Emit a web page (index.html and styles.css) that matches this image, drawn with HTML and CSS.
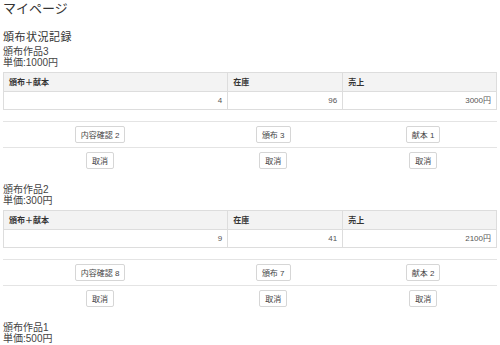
FILE: index.html
```html
<!DOCTYPE html>
<html lang="ja">
<head>
  <meta charset="UTF-8">
  <title>マイページ</title>
  <link rel="stylesheet" href="styles.css">
</head>
<body>
  <h1>マイページ</h1>
  <h2>頒布状況記録</h2>

  <!-- 作品ごとの記録 -->
  <div class="work">
    <p class="work-info">頒布作品3<br>単価:1000円</p>
    <table class="stats">
      <tr><th class="col-count">頒布＋献本</th><th class="col-stock">在庫</th><th>売上</th></tr>
      <tr><td>4</td><td>96</td><td>3000円</td></tr>
    </table>
    <table class="actions">
      <tr>
        <td class="col-check"><button>内容確認 2</button></td>
        <td class="col-sell"><button>頒布 3</button></td>
        <td><button>献本 1</button></td>
      </tr>
      <tr>
        <td><button>取消</button></td>
        <td><button>取消</button></td>
        <td><button>取消</button></td>
      </tr>
    </table>
  </div>

  <div class="work">
    <p class="work-info">頒布作品2<br>単価:300円</p>
    <table class="stats">
      <tr><th class="col-count">頒布＋献本</th><th class="col-stock">在庫</th><th>売上</th></tr>
      <tr><td>9</td><td>41</td><td>2100円</td></tr>
    </table>
    <table class="actions">
      <tr>
        <td class="col-check"><button>内容確認 8</button></td>
        <td class="col-sell"><button>頒布 7</button></td>
        <td><button>献本 2</button></td>
      </tr>
      <tr>
        <td><button>取消</button></td>
        <td><button>取消</button></td>
        <td><button>取消</button></td>
      </tr>
    </table>
  </div>

  <div class="work">
    <p class="work-info">頒布作品1<br>単価:500円</p>
  </div>
</body>
</html>
```

FILE: styles.css
```css
body {
  font-family: 'Liberation Sans', 'Noto Sans CJK JP', sans-serif;
  margin: 0;
  padding: 0 3px;
  color: #333;
  font-size: 10px;
  line-height: 11px;
}

h1 {
  font-size: 13px;
  font-weight: normal;
  line-height: 17px;
  margin: 0;
}

h2 {
  font-size: 11px;
  font-weight: normal;
  line-height: 14px;
  margin: 13px 0 2px;
  letter-spacing: 0.5px;
}

.work {
  margin-bottom: 11px;
}

.work-info {
  margin: 0;
  color: #444;
}

.stats {
  width: 100%;
  margin-top: 4px;
  border-collapse: collapse;
  font-size: 8px;
}

.stats th,
.stats td {
  border: 1px solid #ddd;
  padding: 0 5px;
  height: 17px;
}

.stats th {
  background-color: #f3f3f3;
  text-align: left;
  height: 18px;
}

.stats td {
  text-align: right;
  color: #555;
}

.col-count {
  width: 45.5%;
}

.col-stock {
  width: 23.3%;
}

.actions {
  width: 100%;
  margin-top: 11px;
  border-collapse: collapse;
}

.actions td {
  border-top: 1px solid #e4e4e4;
  padding: 4px 4px;
  text-align: center;
}

.col-check {
  width: 39.3%;
}

.col-sell {
  width: 30.8%;
}

button {
  font-family: inherit;
  font-size: 8px;
  height: 17px;
  padding: 0 5px;
  background-color: #fff;
  color: #444;
  border: 1px solid #d6d6d6;
  border-radius: 2px;
}
```
